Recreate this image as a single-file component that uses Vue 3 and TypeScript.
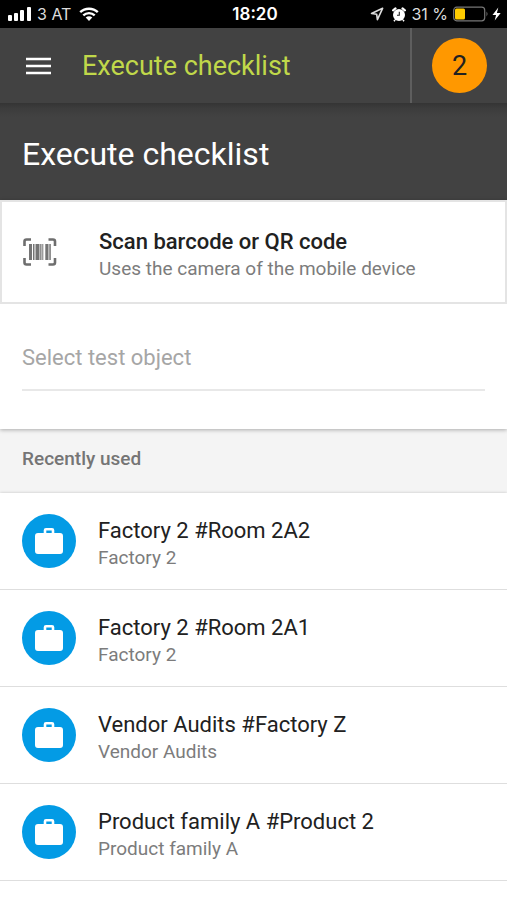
<script setup lang="ts">
import { ref } from 'vue'

interface TestObject {
  id: number
  name: string
  parent: string
}

const query = ref('')
const openCount = ref(2)

const recent: TestObject[] = [
  { id: 1, name: 'Factory 2 #Room 2A2', parent: 'Factory 2' },
  { id: 2, name: 'Factory 2 #Room 2A1', parent: 'Factory 2' },
  { id: 3, name: 'Vendor Audits #Factory Z', parent: 'Vendor Audits' },
  { id: 4, name: 'Product family A #Product 2', parent: 'Product family A' },
]
</script>

<template>
  <div class="screen">
    <div class="status">
      <div class="status-left">
        <svg class="signal" width="24" height="14" viewBox="0 0 24 14" aria-hidden="true">
          <rect x="0" y="8" width="4" height="6" rx="1" />
          <rect x="6" y="6" width="4" height="8" rx="1" />
          <rect x="12" y="3" width="4" height="11" rx="1" />
          <rect x="19" y="0" width="4" height="14" rx="1" />
        </svg>
        <span>3 AT</span>
        <svg class="wifi" width="20" height="14" viewBox="0 0 20 14" aria-hidden="true">
          <path d="M1.2 5.2C6 .6 14 .6 18.800 5.200" />
          <path d="M4.300 8.400c3.200-3 8.200-3 11.400 0" />
          <path class="solid" d="M6.700 10.600c1.900-1.700 4.700-1.700 6.600 0L10 14z" />
        </svg>
      </div>
      <span class="time">18:20</span>
      <div class="status-right">
        <svg width="14" height="14" viewBox="0 0 14 14" aria-hidden="true">
          <path d="M12.600 1.300 1.500 6.500l5.200.8.7 5.300z" fill="none" stroke="#ddd" stroke-width="1.600" stroke-linejoin="round" />
        </svg>
        <svg class="alarm" width="14" height="15" viewBox="0 0 14 15" aria-hidden="true">
          <circle cx="7" cy="8" r="6" fill="#fff" />
          <path d="M1.100 3.400 3.500 1.400M12.900 3.400l-2.400-2" stroke="#fff" stroke-width="2.200" stroke-linecap="round" />
          <path d="M3 13 2 14.300M11 13l1 1.300" stroke="#fff" stroke-width="1.600" />
          <path d="M7.300 4.800v3.500H5" fill="none" stroke="#222" stroke-width="1.100" />
        </svg>
        <span>31 %</span>
        <svg width="49" height="16" viewBox="0 0 49 16" aria-hidden="true">
          <rect x=".7" y="1.200" width="31" height="13.600" rx="3" fill="none" stroke="#777" stroke-width="1.200" />
          <rect x="2" y="2.600" width="10" height="10.800" rx="1.500" fill="#ffcc00" />
          <path d="M33.500 5.600q2 2.400 0 4.800z" fill="#777" />
          <path d="M45.300 1.500 39.500 9h3.600l-1.400 5.500L47.700 7h-3.800z" fill="#fff" />
        </svg>
      </div>
    </div>

    <header class="toolbar">
      <button class="menu" type="button" aria-label="Menu">
        <svg width="26" height="18" viewBox="0 0 26 18" aria-hidden="true">
          <path d="M0 2h25M0 9h25M0 16h25" stroke="#fff" stroke-width="2.700" />
        </svg>
      </button>
      <span class="toolbar-title">Execute checklist</span>
      <div class="counter">
        <button class="badge" type="button">{{ openCount }}</button>
      </div>
    </header>

    <main>
      <div class="heading">
        <h1>Execute checklist</h1>
      </div>

      <section class="picker">
        <button class="scan" type="button">
          <svg width="34" height="28" viewBox="0 0 34 28" aria-hidden="true">
            <path
              d="M1.500 8V3.500q0-2 2-2H8M25.500 1.500H30q2 0 2 2V8M32 20v4.500q0 2-2 2h-4.500M8 26.500H3.500q-2 0-2-2V20"
              fill="none"
              stroke="#6e6e6e"
              stroke-width="2.600"
            />
            <path
              d="M6 6h3v16H6zM10 6h1.500v16H10zM12.500 6h4v16h-4zM17.200 6h1.300v16h-1.300zM19.300 6h1v16h-1zM22.300 6h3.200v16h-3.200zM26.300 6h1.500v16h-1.500z"
              fill="#757575"
            />
          </svg>
          <span class="lines">
            <span class="primary strong">Scan barcode or QR code</span>
            <span class="secondary">Uses the camera of the mobile device</span>
          </span>
        </button>
        <div class="field">
          <input v-model="query" type="text" placeholder="Select test object" aria-label="Select test object" />
        </div>
      </section>

      <h2>Recently used</h2>

      <ul class="recent">
        <li v-for="item in recent" :key="item.id">
          <button class="row" type="button">
            <span class="avatar">
              <svg width="28" height="28" viewBox="0 0 28 28" aria-hidden="true">
                <path
                  fill-rule="evenodd"
                  d="M8.700 6V3.300Q8.700 1 11 1h6q2.300 0 2.300 2.300V6H25q3 0 3 3v15q0 3-3 3H3q-3 0-3-3V9q0-3 3-3zM11.300 6h5.400V3.500h-5.400z"
                  fill="#fff"
                />
              </svg>
            </span>
            <span class="lines">
              <span class="primary">{{ item.name }}</span>
              <span class="secondary">{{ item.parent }}</span>
            </span>
          </button>
        </li>
      </ul>
    </main>
  </div>
</template>

<style>
body {
  margin: 0;
  background: #fff;
}
</style>

<style scoped>
.screen {
  font-family: Roboto, 'Liberation Sans', sans-serif;
  color: #212121;
}

button,
input {
  margin: 0;
  padding: 0;
  border: 0;
  background: none;
  font: inherit;
  color: inherit;
  text-align: left;
}

svg {
  display: block;
  flex: none;
}

.status {
  display: grid;
  grid-template-columns: 1fr auto 1fr;
  align-items: center;
  height: 28px;
  padding: 0 5px 0 8px;
  background: #000;
  color: #fff;
  font-family: Inter, 'Liberation Sans', sans-serif;
  font-size: 16px;
}

.status-left,
.status-right {
  display: flex;
  align-items: center;
  gap: 5px;
  color: #ddd;
}

.status-right {
  justify-content: flex-end;
}

.alarm {
  margin-left: 3px;
}

.time {
  font-size: 17px;
  font-weight: 600;
}

.signal {
  fill: #fff;
}

.wifi {
  margin-left: 3px;
  fill: none;
  stroke: #fff;
  stroke-width: 2.4;
}

.wifi .solid {
  fill: #fff;
  stroke: none;
}

.toolbar {
  position: relative;
  display: flex;
  align-items: center;
  height: 75px;
  padding-left: 26px;
  background: #424242;
}

.menu {
  margin-right: 30px;
}

.toolbar-title {
  flex: 1;
  color: #c0d84a;
  font-size: 27px;
}

.counter {
  display: flex;
  align-items: center;
  align-self: stretch;
  padding: 0 20px;
  border-left: 2px solid #5e5e5e;
}

.badge {
  width: 55px;
  height: 55px;
  border-radius: 50%;
  background: #ff9800;
  color: #212121;
  font-size: 27px;
  text-align: center;
}

.heading {
  padding: 32px 22px 27px;
  background: linear-gradient(#343434, #3c3c3c 5px, #424242 14px);
  color: #fff;
}

h1 {
  margin: 0;
  font-size: 32px;
  font-weight: 400;
  line-height: 38px;
}

.picker {
  position: relative;
  background: #fff;
  box-shadow: 0 1px 4px rgba(0, 0, 0, 0.3);
}

.scan {
  display: flex;
  align-items: center;
  gap: 42px;
  box-sizing: border-box;
  width: 100%;
  height: 104px;
  padding: 0 21px;
  border: 2px solid #e4e4e4;
}

.lines {
  display: flex;
  flex-direction: column;
  padding-top: 5px;
}

.primary {
  font-size: 22px;
  line-height: 28px;
}

.secondary {
  color: #7c7c7c;
  font-size: 19px;
  line-height: 26px;
}

.strong {
  font-weight: 500;
}

.field {
  padding: 29px 22px 38px;
}

.field input {
  display: block;
  box-sizing: border-box;
  width: 100%;
  height: 58px;
  padding-bottom: 8px;
  border-bottom: 2px solid #e8e8e8;
  border-radius: 0;
  outline: none;
  font-size: 22px;
}

.field input::placeholder {
  color: #a6a6a6;
  opacity: 1;
}

h2 {
  margin: 0;
  padding: 0 22px 4px;
  background: #f4f4f4;
  color: #757575;
  font-size: 19px;
  font-weight: 500;
  line-height: 60px;
}

.recent {
  margin: 0;
  padding: 0;
  list-style: none;
  background: #fff;
  box-shadow: 0 0 3px rgba(0, 0, 0, 0.2);
}

.row {
  display: flex;
  align-items: center;
  gap: 22px;
  box-sizing: border-box;
  width: 100%;
  height: 97px;
  padding: 0 22px;
  border-bottom: 1px solid #dedede;
}

.avatar {
  display: grid;
  place-items: center;
  flex: none;
  width: 54px;
  height: 54px;
  border-radius: 50%;
  background: #039be5;
}
</style>
